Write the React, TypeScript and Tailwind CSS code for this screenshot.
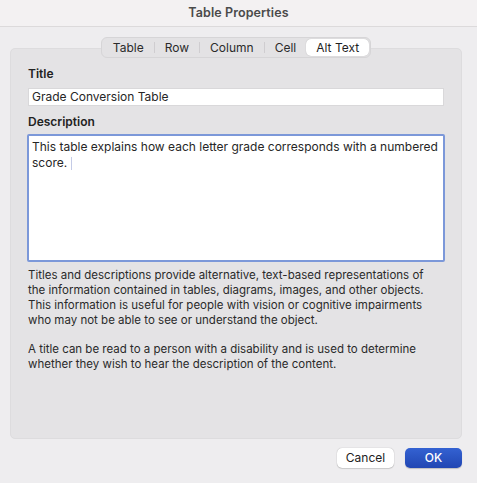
import React from "react";

const TABS = ["Table", "Row", "Column", "Cell", "Alt Text"];

export default function App() {
  const active = "Alt Text";

  return (
    <div
      className="w-[477px] h-[483px] bg-[#eeedef] text-[#262626] flex flex-col overflow-hidden"
      style={{ fontFamily: "Inter, 'Liberation Sans', sans-serif" }}
    >
      {/* title bar */}
      <div className="h-[27px] shrink-0 bg-[#f3f1f2] border-b border-[#dcdadb] flex items-center justify-center">
        <span className="text-[12.5px] font-semibold text-[#4a4a4a] tracking-[0.1px]">Table Properties</span>
      </div>

      <div className="flex-1 flex flex-col px-[10px] pt-[10px] pr-[15px]">
        {/* tabs */}
        <div className="relative z-10 flex justify-center -mb-[10px]">
          <div className="flex items-center h-[21px] rounded-[6px] bg-[#e3e2e4] border border-[#d6d5d7] p-[1px] text-[12px]">
            {TABS.map((t, i) => {
              const on = t === active;
              const nextOn = TABS[i + 1] === active;
              return (
                <React.Fragment key={t}>
                  <div
                    className={
                      on
                        ? "h-full flex items-center px-[10px] rounded-[5px] bg-white shadow-[0_0_1px_rgba(0,0,0,0.25)] text-[#1f1f1f]"
                        : "h-full flex items-center px-[10px] text-[#2b2b2b]"
                    }
                  >
                    {t}
                  </div>
                  {i < TABS.length - 1 && !on && !nextOn && <div className="w-px h-[11px] bg-[#cfcdd0]" />}
                </React.Fragment>
              );
            })}
          </div>
        </div>

        {/* panel */}
        <div className="h-[391px] rounded-[5px] bg-[#e4e3e5] border border-[#dddcde] px-[17px] pt-[16px]">
          <div className="text-[12px] font-semibold text-[#222]">Title</div>
          <div className="mt-[5px] h-[18px] bg-white border border-[#d9d8da] flex items-center px-[3px] text-[12px] text-[#262626]">
            Grade Conversion Table
          </div>
          <div className="mt-[7px] text-[12px] font-semibold text-[#222]">Description</div>
          <div className="mt-[3px] -mx-[1px] h-[128px] bg-white border-[2px] border-[#7c98d9] rounded-[2px] px-[3px] pt-[3px] text-[12px] leading-[16px] text-[#262626]">
            This table explains how each letter grade corresponds with a numbered score.
            <span className="inline-block w-px h-[13px] bg-[#c4cbe6] ml-[4px] align-middle" />
          </div>
          <div className="mt-[6px] text-[11.5px] leading-[15px] text-[#2a2a2a]">
            <p>
              Titles and descriptions provide alternative, text-based representations of the information contained in
              tables, diagrams, images, and other objects. This information is useful for people with vision or cognitive
              impairments who may not be able to see or understand the object.
            </p>
            <p className="mt-[14px]">
              A title can be read to a person with a disability and is used to determine whether they wish to hear the
              description of the content.
            </p>
          </div>
        </div>

        {/* buttons */}
        <div className="flex justify-end gap-[11px] mt-[9px] pr-0">
          <button className="w-[57px] h-[20px] rounded-[5px] bg-white shadow-[0_0_1px_rgba(0,0,0,0.35),0_1px_1px_rgba(0,0,0,0.12)] text-[12px] text-[#222]">
            Cancel
          </button>
          <button className="w-[57px] h-[20px] rounded-[5px] bg-gradient-to-b from-[#3462d2] to-[#2146b3] shadow-[0_1px_1px_rgba(0,0,0,0.2)] text-[12px] font-medium text-white">
            OK
          </button>
        </div>
      </div>
    </div>
  );
}
